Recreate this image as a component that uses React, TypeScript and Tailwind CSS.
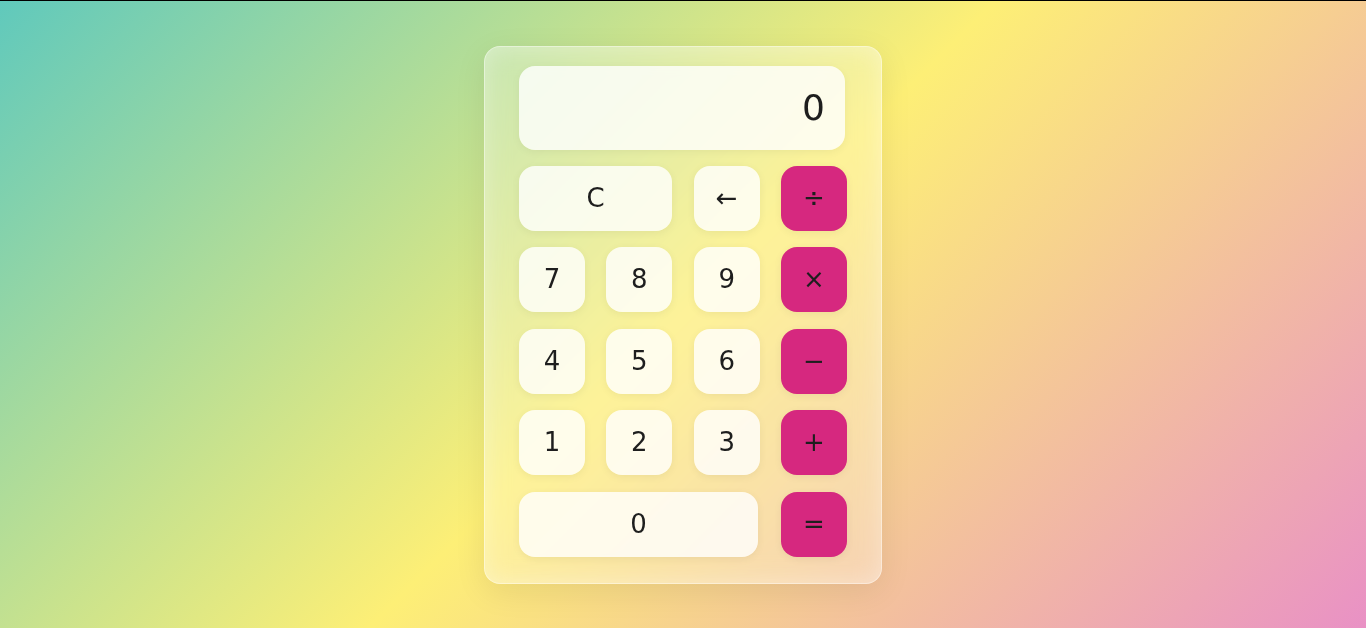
import React from "react";

type Btn = { label: string; kind: "num" | "op"; span?: string };

const rows: Btn[][] = [
  [{ label: "C", kind: "num", span: "col-span-2" }, { label: "←", kind: "num" }, { label: "÷", kind: "op" }],
  [{ label: "7", kind: "num" }, { label: "8", kind: "num" }, { label: "9", kind: "num" }, { label: "×", kind: "op" }],
  [{ label: "4", kind: "num" }, { label: "5", kind: "num" }, { label: "6", kind: "num" }, { label: "−", kind: "op" }],
  [{ label: "1", kind: "num" }, { label: "2", kind: "num" }, { label: "3", kind: "num" }, { label: "+", kind: "op" }],
  [{ label: "0", kind: "num", span: "col-span-3 w-[239px]" }, { label: "=", kind: "op" }],
];

export default function App() {
  return (
    <div
      className="h-[628px] w-full border-t border-black flex items-center justify-center bg-[linear-gradient(135deg,#60c9bc_0%,#fdef76_50%,#e991c5_100%)]"
      style={{ fontFamily: '"DejaVu Sans", "Liberation Sans", sans-serif' }}
    >
      <div className="w-[398px] h-[538px] rounded-2xl border border-white/50 bg-white/25 backdrop-blur-md shadow-[0_8px_32px_rgba(0,0,0,0.08),inset_0_0_24px_rgba(255,255,255,0.35)] pl-[34px] pr-[36px] pt-[19px]">
        <div className="h-[84px] w-[326px] rounded-2xl bg-white/80 shadow-[0_2px_8px_rgba(0,0,0,0.05)] flex items-center justify-end pr-[20px] text-[36px] text-[#1e1e1e]">
          0
        </div>
        <div className="mt-[16px] grid grid-cols-[66px_66px_66px_66px] gap-x-[21.33px] gap-y-[16.5px]">
          {rows.flat().map((b, i) => (
            <button
              key={i}
              className={
                "h-[65px] rounded-2xl flex items-center justify-center text-[26px] text-[#1e1e1e] shadow-[0_2px_8px_rgba(0,0,0,0.06)] " +
                (b.kind === "op" ? "bg-[#d6287f] " : "bg-white/80 ") +
                (b.span ?? "")
              }
            >
              {b.label}
            </button>
          ))}
        </div>
      </div>
    </div>
  );
}
